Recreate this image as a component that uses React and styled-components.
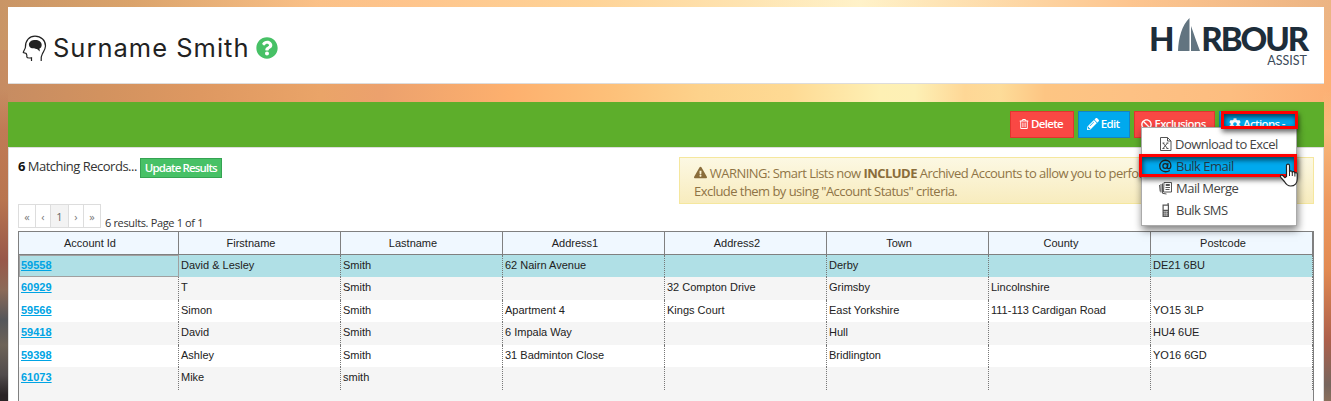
import React from "react";
import styled, { createGlobalStyle } from "styled-components";
import { FaBan, FaCog, FaExclamationTriangle, FaPencilAlt, FaQuestionCircle, FaRegTrashAlt } from "react-icons/fa";

const sans = `"Open Sans", "Noto Sans", sans-serif`;

const GlobalStyle = createGlobalStyle`
  * { box-sizing: border-box; }
  html, body { margin: 0; height: 401px; overflow: hidden; }
  body { font-family: ${sans}; font-size: 13px; color: #333; }
`;

const Page = styled.div`
  height: 401px;
  padding: 7px 7px 0 8px;
  overflow: hidden;
  display: flex;
  flex-direction: column;
  gap: 18px;
  background:
    linear-gradient(180deg, transparent 90px, #c07a55 130px, #b8754f 200px, #98584a 260px, #8b6a58 290px, #55565a 320px, #6d6358 345px, #514b4c 375px, #2a2426 395px) 0 0 / 8px 401px no-repeat,
    linear-gradient(180deg, transparent 90px, #f9b97d 130px, #ee9a60 200px, #e28a52 270px, #ad604c 340px, #77665e 385px, #8a6f5c 401px) 1323px 0 / 8px 401px no-repeat,
    linear-gradient(90deg, #c68c62 0, #d2925f 100px, #de9861 200px, #eaa468 320px, #eca16d 380px, #fdb06e 510px, #fdc079 610px, #fdd28b 700px, #feda94 790px, #fef0b4 880px, #fdf0b5 915px, #fed796 965px, #fddc99 1000px, #fdc583 1045px, #fdc184 1130px, #fdbd80 1230px, #fcb074 1331px) 0 50px / 1331px 100px no-repeat,
    linear-gradient(90deg, #c99566 0, #daa36b 130px, #fbc188 320px, #fec48c 400px, #fed397 590px, #fee3b0 740px, #fff2c9 860px, #fee4b5 940px, #fdd3a0 1040px, #fdc58f 1130px, #ecb483 1331px);
`;

const Header = styled.header`
  flex: none;
  height: 77px;
  padding: 0 17px 0 14px;
  display: flex;
  justify-content: space-between;
  background: #fff;
  border-bottom: 1px solid #ddd;
`;

const Title = styled.h1`
  margin: 0;
  display: flex;
  align-items: center;
  height: 82px;
  font: 400 25.5px/32px Inter, sans-serif;
  color: #222;
`;

const TitleText = styled.span`
  margin: 0 6px 0 6px;
  letter-spacing: 1px;
`;

const HelpIcon = styled(FaQuestionCircle)`
  width: 22px;
  height: 22px;
  color: #47c166;
`;

const Brand = styled.div`
  padding-top: 12px;
  display: flex;
  flex-direction: column;
  align-items: flex-end;
`;

const BrandName = styled.div`
  height: 34px;
  display: flex;
  align-items: flex-end;
  font: 900 33px/30px Lato, sans-serif;
  letter-spacing: -2.1px;
  color: #1d2d3a;
  svg { margin: 0 1px 1px 6px; }
`;

const BrandSub = styled.div`
  padding-top: 1px;
  font: 400 12.5px/13px Lato, sans-serif;
  color: #3c4a59;
`;

const Panel = styled.main`
  position: relative;
  flex: 1;
  min-height: 0;
  display: flex;
  flex-direction: column;
  background: #fff;
  border-left: 1px solid #ddd;
  border-right: 1px solid #ddd;
`;

const Toolbar = styled.div`
  flex: none;
  height: 46px;
  margin: 0 -1px;
  padding: 9px 27px 0 0;
  display: flex;
  justify-content: flex-end;
  gap: 4px;
  background: #5dae2b;
  border-bottom: 1px solid #ddd;
`;

const Button = styled.button`
  width: ${(p) => p.$width}px;
  height: 27px;
  padding: 0 2px 1px 0;
  display: flex;
  align-items: center;
  justify-content: center;
  gap: 2px;
  font: 600 11.5px/16px ${sans};
  letter-spacing: -0.65px;
  color: #fff;
  background: ${(p) => (p.$tone === "danger" ? "#f94844" : "#00a9ee")};
  border: 1px solid ${(p) => (p.$tone === "danger" ? "#e0352f" : "#1583c4")};
`;

const Body = styled.section`
  flex: 1;
  min-height: 0;
  padding: 9px 9px 0;
  display: flex;
  flex-direction: column;
`;

const Summary = styled.div`
  height: 47px;
  display: flex;
  justify-content: space-between;
`;

const Matches = styled.div`
  display: flex;
  align-items: flex-start;
  gap: 3px;
  line-height: 19px;
  color: #333;
  letter-spacing: -0.5px;
  b { color: #111; }
`;

const UpdateButton = styled.button`
  margin-top: 1px;
  width: 82px;
  height: 20px;
  padding: 0;
  font: 600 11.5px/16px ${sans};
  letter-spacing: -0.85px;
  color: #fff;
  background: #47c166;
  border: 1px solid #35a352;
`;

const Warning = styled.div`
  width: 635px;
  height: 47px;
  padding: 6px 14px;
  line-height: 18px;
  letter-spacing: -0.54px;
  white-space: nowrap;
  color: #8f7446;
  background: linear-gradient(#fcf8e3, #f8ecbe);
  border: 1px solid #f5e79e;
  svg { width: 13px; height: 13px; vertical-align: -1px; color: #8a6d3b; }
  b { color: #8a6d3b; }
`;

const PagerRow = styled.div`
  height: 27px;
  display: flex;
  gap: 4px;
`;

const Pager = styled.div`
  display: flex;
  height: 24px;
  border: 1px solid #ddd;
`;

const PageLink = styled.span`
  width: ${(p) => p.$width}px;
  display: grid;
  place-items: center;
  font-size: 11px;
  color: ${(p) => (p.$current ? "#666" : "#777")};
  background: ${(p) => (p.$current ? "#f3f3f3" : "#fff")};
  & + & { border-left: 1px solid #ddd; }
`;

const PageInfo = styled.span`
  padding-top: 12px;
  font-size: 11px;
  line-height: 14px;
  letter-spacing: -0.35px;
`;

const Grid = styled.div`
  flex: 1;
  background: #f5f5f5;
  border: 1px solid #808080;
  border-bottom: 0;
  font: 11px/13px "Liberation Sans", Arial, sans-serif;
  color: #222;
`;

const GridHead = styled.div`
  height: 23px;
  display: flex;
  background: #f0f8ff;
  border-bottom: 1px solid #808080;
`;

const HeadCell = styled.div`
  flex: none;
  width: ${(p) => p.$width}px;
  padding: 5px 17px 0 0;
  text-align: center;
  border-right: 1px solid #808080;
`;

const Row = styled.div`
  height: ${(p) => p.$height}px;
  display: flex;
  background: ${(p) => (p.$selected ? "#b0e0e6" : p.$striped ? "#f5f5f5" : "#fff")};
`;

const Cell = styled.div`
  flex: none;
  width: ${(p) => p.$width}px;
  padding: 4px 2px 0;
  border-right: 1px ${(p) => (p.$focused ? "solid #a0a0a0" : "dotted #777")};
  ${(p) => p.$focused && "box-shadow: inset 0 1px #a0a0a0, inset 1px 0 #a0a0a0, inset 0 -1px #a0a0a0;"}
`;

const AccountLink = styled.a`
  font-weight: 700;
  color: #00a4e4;
  text-decoration: underline;
`;

const Menu = styled.div`
  position: absolute;
  left: 1132px;
  top: 25px;
  width: 156px;
  height: 99px;
  padding-top: 5px;
  background: #fff;
  border: 1px solid #aaa;
  box-shadow: 1px 4px 8px rgba(0, 0, 0, 0.5);
`;

const MenuItem = styled.div`
  height: 22px;
  padding-left: 17px;
  display: flex;
  align-items: center;
  gap: ${(p) => p.$gap || 3}px;
  font-size: 13px;
  letter-spacing: -0.52px;
  color: ${(p) => (p.$active ? "#253a48" : "#444")};
  background: ${(p) => (p.$active ? "#00a9ee" : "transparent")};
  svg { width: 13px; height: 14px; flex: none; }
`;

const Callout = styled.div`
  position: absolute;
  left: ${(p) => p.$left}px;
  top: ${(p) => p.$top}px;
  width: ${(p) => p.$width}px;
  height: ${(p) => p.$height}px;
  border: 3px solid #f00;
  box-shadow: 1px 3px 5px rgba(0, 0, 0, 0.6), inset 1px 3px 5px rgba(0, 0, 0, 0.6);
`;

const Pointer = styled.svg`
  position: absolute;
  left: 1270px;
  top: 59px;
`;

const HeadIcon = () => (
  <svg width="25" height="27" viewBox="0 0 25 27" fill="none" stroke="#222" strokeWidth="1.2">
    <path d="M9.500 26v-3.200c-2 .3-4.300.4-4.600-.6-.3-.9.300-1.700-.3-2.500l-.4-1.200-2.900-.9c0-1.500 1.700-3 2.100-5.200C3.300 5.500 7.400 1.200 13 1.200c6 0 10.700 4.300 10.500 9.800-.1 3.200-1.700 5.300-3 7.500-1.300 2.300-1.700 4.500-1.300 7.500" />
    <path fill="#222" stroke="none" d="M7 10.200C6.500 7.300 9 5.400 12 5c4-.5 7.600 1.300 7.700 4.800.1 2-.9 3.200-2.200 3.700l.3 3-2.800-2.400c-1.300-.1-1.800-.6-2.900-.8-2 .2-4.700-.3-5.100-3.100z" />
  </svg>
);

const Sail = () => (
  <svg width="22" height="34" viewBox="0 0 22 34">
    <path fill="#627480" d="M0 33C.5 20 4 7 11.500 0v33zM13 8C15.500 15 18.500 24 22 33h-9z" />
  </svg>
);

const ExcelIcon = () => (
  <svg viewBox="0 0 13 14" fill="none" stroke="#555" strokeWidth="1">
    <path d="M1.500.5h7L12 4v9.500H1.500zM8.500.5V4H12M4 6l4.500 5.500M8.500 6L4 11.500M3.500 6h2M7.500 6h2M3.500 11.500h2M7.500 11.500h2" />
  </svg>
);

const AtIcon = () => (
  <svg viewBox="0 0 14 14" fill="none" stroke="#222" strokeWidth="1.4">
    <circle cx="6.700" cy="7" r="2.500" />
    <path d="M9.700 4L9 8.200c-.2 1.300.4 1.600 1.200 1.600 1.500 0 2.600-1.300 2.600-3.200C12.800 3.300 10.500.8 7 .8A6.100 6.100 0 0 0 .8 7c0 3.600 2.600 6.200 6.200 6.200 1.800 0 3.300-.5 4.600-1.400" />
  </svg>
);

const MergeIcon = () => (
  <svg viewBox="0 0 13 14" fill="none" stroke="#555" strokeWidth="1">
    <path d="M5 1.500h7.500v9.500H4.500zM7 3.500h3.500v1H7zM6.500 6.500h4.500M6.500 8.500h4M3.500 2.500v9.800l4 .7M2 3v8.500M.5 4l.7 6.500" />
  </svg>
);

const PhoneIcon = () => (
  <svg viewBox="0 0 13 14">
    <path fill="#555" d="M8.500 0h1.200v1.500h.3V14H3.500V1.500h5zM4.700 2.700v4h4.100v-4z" />
    <path stroke="#fff" strokeWidth=".4" d="M4.500 8.500H9M4.500 10.300H9M4.500 12.100H9M5.900 8v5M7.600 8v5" />
  </svg>
);

const columns = [
  { name: "Account Id", width: 160 },
  { name: "Firstname", width: 162 },
  { name: "Lastname", width: 162 },
  { name: "Address1", width: 162 },
  { name: "Address2", width: 162 },
  { name: "Town", width: 162 },
  { name: "County", width: 162 },
  { name: "Postcode", width: 162 },
];

const records = [
  ["59558", "David & Lesley", "Smith", "62 Nairn Avenue", "", "Derby", "", "DE21 6BU"],
  ["60929", "T", "Smith", "", "32 Compton Drive", "Grimsby", "Lincolnshire", ""],
  ["59566", "Simon", "Smith", "Apartment 4", "Kings Court", "East Yorkshire", "111-113 Cardigan Road", "YO15 3LP"],
  ["59418", "David", "Smith", "6 Impala Way", "", "Hull", "", "HU4 6UE"],
  ["59398", "Ashley", "Smith", "31 Badminton Close", "", "Bridlington", "", "YO16 6GD"],
  ["61073", "Mike", "smith", "", "", "", "", ""],
];

export default function App() {
  return (
    <Page>
      <GlobalStyle />
      <Header>
        <Title>
          <HeadIcon />
          <TitleText>Surname Smith</TitleText>
          <HelpIcon />
        </Title>
        <Brand>
          <BrandName>H<Sail />RBOUR</BrandName>
          <BrandSub>ASSIST</BrandSub>
        </Brand>
      </Header>
      <Panel>
        <Toolbar>
          <Button $tone="danger" $width={64}><FaRegTrashAlt size={10} />Delete</Button>
          <Button $width={52}><FaPencilAlt size={12} />Edit</Button>
          <Button $tone="danger" $width={81}><FaBan size={11} />Exclusions</Button>
          <Button $width={78}><FaCog size={12} />Actions -</Button>
        </Toolbar>
        <Body>
          <Summary>
            <Matches>
              <span><b>6</b> Matching Records...</span>
              <UpdateButton>Update Results</UpdateButton>
            </Matches>
            <Warning>
              <FaExclamationTriangle /> WARNING: Smart Lists now <b>INCLUDE</b> Archived Accounts to allow you to perform
              <br />
              Exclude them by using "Account Status" criteria.
            </Warning>
          </Summary>
          <PagerRow>
            <Pager>
              <PageLink $width={16}>«</PageLink>
              <PageLink $width={15}>‹</PageLink>
              <PageLink $width={18} $current>1</PageLink>
              <PageLink $width={15}>›</PageLink>
              <PageLink $width={17}>»</PageLink>
            </Pager>
            <PageInfo>6 results. Page 1 of 1</PageInfo>
          </PagerRow>
          <Grid>
            <GridHead>
              {columns.map((c) => <HeadCell key={c.name} $width={c.width}>{c.name}</HeadCell>)}
            </GridHead>
            {records.map((record, r) => (
              <Row key={record[0]} $selected={r === 0} $striped={r % 2 === 1} $height={r % 2 ? 23 : 22}>
                {record.map((value, c) => (
                  <Cell key={c} $width={columns[c].width} $focused={r === 0 && c === 0}>
                    {c === 0 ? <AccountLink>{value}</AccountLink> : value}
                  </Cell>
                ))}
              </Row>
            ))}
          </Grid>
        </Body>
        <Menu>
          <MenuItem><ExcelIcon />Download to Excel</MenuItem>
          <MenuItem $active $gap={4}><AtIcon />Bulk Email</MenuItem>
          <MenuItem $gap={4}><MergeIcon />Mail Merge</MenuItem>
          <MenuItem $gap={4}><PhoneIcon />Bulk SMS</MenuItem>
        </Menu>
        <Callout $left={1212} $top={9} $width={77} $height={18} />
        <Callout $left={1130} $top={52} $width={158} $height={23} />
        <Pointer width="20" height="26" viewBox="0 0 20 26">
          <path fill="#fff" stroke="#222" strokeWidth="1.200" strokeLinejoin="round" d="M7.500 15.500V4.800c0-2.300 3-2.300 3 0v6c.7-1.300 2.600-1 2.800.4.800-1 2.400-.6 2.600.7 1-.7 2.300 0 2.300 1.300V18c0 4-2.500 7-6.500 7-3.500 0-5-2.200-6.300-4.500L1.800 16.300c-1.200-1.700.7-2.900 2-1.800l2 2.200z" />
          <path stroke="#222" strokeWidth="1" d="M10.500 10v5M13.300 11v4M15.900 12v3.500" />
        </Pointer>
      </Panel>
    </Page>
  );
}
